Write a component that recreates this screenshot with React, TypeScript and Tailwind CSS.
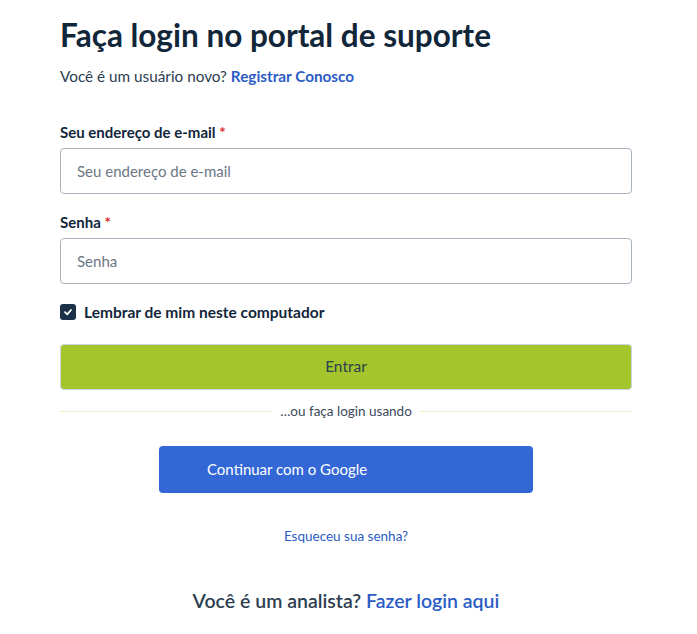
import React from "react";

export default function App() {
  return (
    <div className="min-h-screen bg-white" style={{ fontFamily: "Lato, 'Noto Sans', sans-serif" }}>
      <div className="w-[572px] ml-[60px] pt-[16px] text-[#183247]">
        <h1 className="text-[31.5px] font-bold leading-[38px] text-[#12263a]">Faça login no portal de suporte</h1>
        <p className="mt-[12px] text-[15.3px] leading-[20px] text-[#2c3e50]">
          Você é um usuário novo? <a className="font-bold text-[#2c5cc5]">Registrar Conosco</a>
        </p>

        <label className="block mt-[36px] text-[15px] font-bold leading-[20px] text-[#12263a]">
          Seu endereço de e-mail <span className="text-[#d72d30]">*</span>
        </label>
        <input
          placeholder="Seu endereço de e-mail"
          className="mt-[6px] block w-full h-[46px] rounded-[4px] border border-[#aab4be] px-[16px] text-[15px] placeholder:text-[#6b7785] outline-none"
        />

        <label className="block mt-[18px] text-[15px] font-bold leading-[20px] text-[#12263a]">
          Senha <span className="text-[#d72d30]">*</span>
        </label>
        <input
          placeholder="Senha"
          className="mt-[6px] block w-full h-[46px] rounded-[4px] border border-[#aab4be] px-[16px] text-[15px] placeholder:text-[#6b7785] outline-none"
        />

        <div className="mt-[18px] flex items-center gap-[8px]">
          <span className="flex h-[16px] w-[16px] items-center justify-center rounded-[3px] bg-[#1b3148]">
            <svg width="10" height="10" viewBox="0 0 10 10" fill="none">
              <path d="M2 5.2 L4.2 7.3 L8 3" stroke="white" strokeWidth="1.8" strokeLinecap="round" strokeLinejoin="round" />
            </svg>
          </span>
          <span className="text-[15.5px] font-bold leading-[20px] text-[#12263a]">Lembrar de mim neste computador</span>
        </div>

        <button className="mt-[22px] block w-full h-[46px] rounded-[4px] border border-[#c9d5e0] bg-[#a4c52c] text-[15.5px] text-[#2c3e50]">
          Entrar
        </button>

        <div className="mt-[13px] flex items-center gap-[8px]">
          <div className="h-px flex-1 bg-[#ebf1c4]" />
          <span className="text-[13.5px] leading-[16px] text-[#3b4a5a]">…ou faça login usando</span>
          <div className="h-px flex-1 bg-[#ebf1c4]" />
        </div>

        <div className="mt-[27px] flex justify-center">
          <button className="h-[47px] w-[374px] rounded-[4px] bg-[#3367d6] pl-[48px] text-left text-[15px] text-white">
            Continuar com o Google
          </button>
        </div>

        <p className="mt-[34px] text-center text-[13.5px] leading-[18px] text-[#2c5cc5]">Esqueceu sua senha?</p>

        <p className="mt-[44px] text-center text-[19.5px] font-semibold leading-[24px] text-[#2c3e50]">
          Você é um analista? <a className="text-[#2c5cc5]">Fazer login aqui</a>
        </p>
      </div>
    </div>
  );
}
